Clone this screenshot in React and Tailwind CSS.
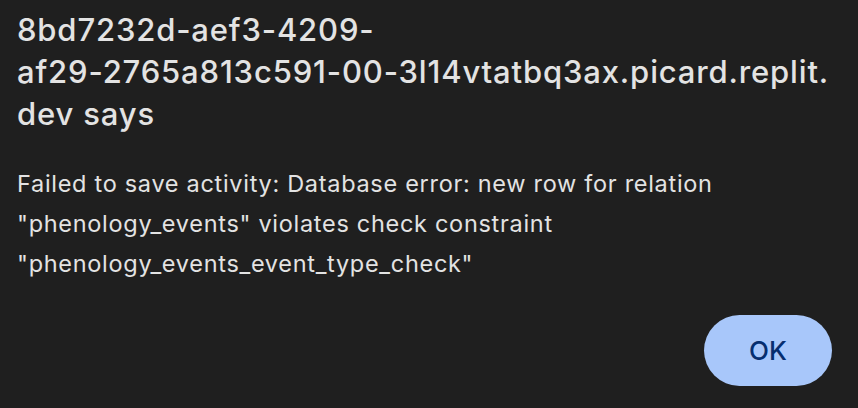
export default function App() {
  return (
    <div className="w-[858px] h-[408px] bg-[#1f1f1f] font-['Inter',sans-serif] text-[#e3e3e3] overflow-hidden">
      <div className="px-[17px] pt-[9px]">
        <h1 className="text-[31px] leading-[42px] font-medium tracking-[0.85px] break-all">
          8bd7232d-aef3-4209-
          <br />
          af29-2765a813c591-00-3l14vtatbq3ax.picard.replit.
          <br />
          dev says
        </h1>
        <p className="mt-[29px] text-[23.5px] leading-[40px] tracking-[0.7px]">
          Failed to save activity: Database error: new row for relation
          <br />
          "phenology_events" violates check constraint
          <br />
          "phenology_events_event_type_check"
        </p>
      </div>
      <div className="flex justify-end pr-[26px] mt-[31px]">
        <button className="w-[128px] h-[71px] rounded-full bg-[#a8c7fa] text-[#062e6f] text-[26px] font-medium">
          OK
        </button>
      </div>
    </div>
  );
}
